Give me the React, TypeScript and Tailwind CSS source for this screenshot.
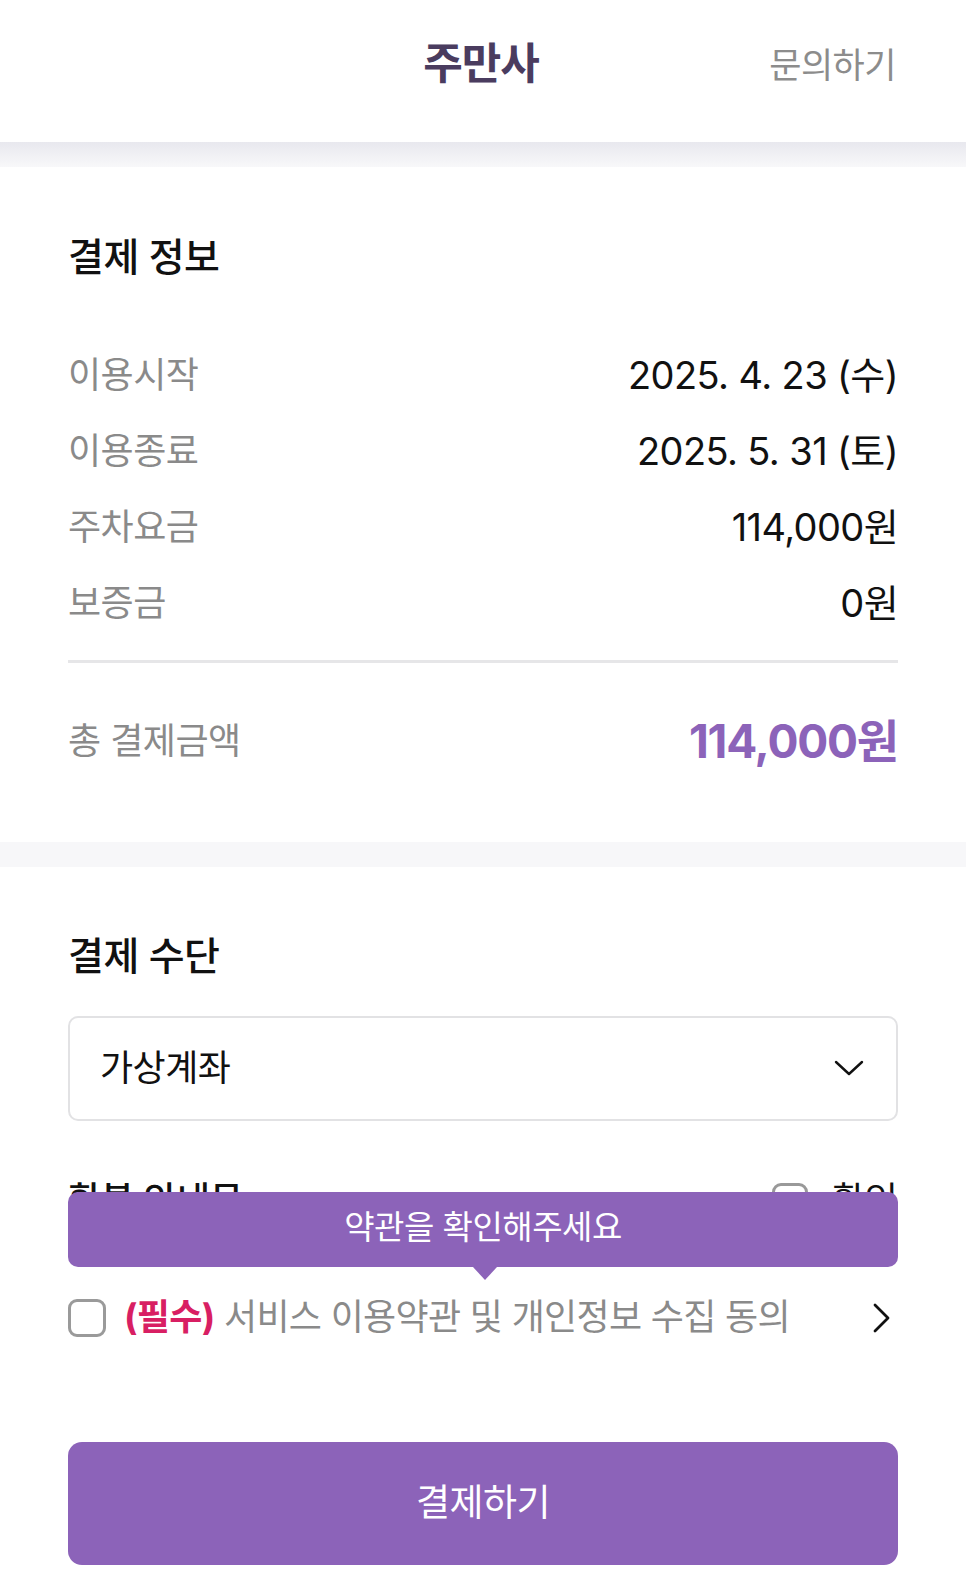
import React from "react";

const font = { fontFamily: 'Inter, "Noto Sans CJK KR", "Noto Sans", sans-serif' };

function Row({ label, value }: { label: string; value: string }) {
  return (
    <div className="flex h-[76px] items-center justify-between">
      <span className="text-[36px] text-[#8a8a8a] tracking-[-0.5px]">{label}</span>
      <span className="text-[38px] text-[#111] tracking-[-0.6px]">{value}</span>
    </div>
  );
}

export default function App() {
  return (
    <div className="w-[966px] min-h-[1593px] bg-white leading-[1.2]" style={font}>
      {/* Header */}
      <header className="relative flex h-[142px] items-center justify-center bg-white pb-[14px]">
        <h1 className="text-[43px] font-bold text-[#4a3c5f] tracking-[-1px] ml-[-4px]">주만사</h1>
        <span className="absolute right-[70px] top-[44px] text-[35px] text-[#8c8c8c] tracking-[-0.5px]">문의하기</span>
      </header>
      <div className="h-[25px] bg-gradient-to-b from-[#e8e8ee] to-[#f8f8fa]" />

      {/* Section 1 */}
      <section className="px-[68px] pt-[67px] pb-[70px]">
        <h2 className="text-[39px] font-medium text-[#111] tracking-[-0.5px]">결제 정보</h2>
        <div className="mt-[57px]">
          <Row label="이용시작" value="2025. 4. 23 (수)" />
          <Row label="이용종료" value="2025. 5. 31 (토)" />
          <Row label="주차요금" value="114,000원" />
          <Row label="보증금" value="0원" />
        </div>
        <div className="mt-[18px] h-[3px] bg-[#e6e6e8]" />
        <div className="mt-[49px] flex h-[60px] items-center justify-between">
          <span className="text-[36px] text-[#8a8a8a] tracking-[-0.5px]">총 결제금액</span>
          <span className="text-[46px] font-bold text-[#8c63b9] tracking-[-1.2px]">114,000원</span>
        </div>
      </section>
      <div className="h-[25px] bg-[#f7f7f9]" />

      {/* Section 2 */}
      <section className="px-[68px] pt-[66px] pb-[28px]">
        <h2 className="text-[39px] font-medium text-[#111] tracking-[-0.5px]">결제 수단</h2>
        <div className="mt-[36px] flex h-[105px] items-center justify-between rounded-[10px] border-2 border-[#e2e2e4] pl-[30px] pr-[32px]">
          <span className="text-[36px] text-[#111] tracking-[-0.5px]">가상계좌</span>
          <svg width="30" height="18" viewBox="0 0 30 18" fill="none">
            <path d="M2 3 L15 15 L28 3" stroke="#111" strokeWidth="2.4" strokeLinecap="round" strokeLinejoin="round" />
          </svg>
        </div>

        {/* row partly hidden by the tooltip */}
        <div className="mt-[60px] flex h-[40px] items-center justify-between">
          <span className="text-[36px] font-medium text-[#111]">환불 안내문</span>
          <div className="flex items-center gap-[24px]">
            <span className="h-[36px] w-[36px] rounded-[9px] border-[3px] border-[#999]" />
            <span className="text-[36px] text-[#111]">확인</span>
          </div>
        </div>

        {/* agreement row with tooltip */}
        <div className="relative mt-[67px] flex h-[60px] items-center justify-between">
          <div className="absolute bottom-full left-0 right-0 mb-[21px]">
            <div className="flex h-[75px] items-center justify-center rounded-[10px] bg-[#8c63b9]">
              <span className="text-[33px] text-white tracking-[-0.5px] pb-[2px]">약관을 확인해주세요</span>
            </div>
            <div className="absolute left-1/2 top-full -translate-x-1/2 ml-[2px] h-0 w-0 border-l-[12px] border-r-[12px] border-t-[13px] border-l-transparent border-r-transparent border-t-[#8c63b9]" />
          </div>
          <div className="flex items-center">
            <span className="h-[38px] w-[38px] rounded-[9px] border-[3px] border-[#9a9a9a]" />
            <span className="ml-[18px] text-[36px] tracking-[-0.7px]">
              <span className="font-bold text-[#d81f63]">(필수)</span>
              <span className="text-[#8a8a8a]"> 서비스 이용약관 및 개인정보 수집 동의</span>
            </span>
          </div>
          <svg width="20" height="30" viewBox="0 0 20 30" fill="none" className="mr-[6px]">
            <path d="M3 2 L16 15 L3 28" stroke="#111" strokeWidth="2.8" strokeLinecap="round" strokeLinejoin="round" />
          </svg>
        </div>

        <button className="mt-[94px] flex h-[123px] w-full items-center justify-center rounded-[14px] bg-[#8c63b9]">
          <span className="text-[37px] text-white tracking-[-0.5px]">결제하기</span>
        </button>
      </section>
    </div>
  );
}
